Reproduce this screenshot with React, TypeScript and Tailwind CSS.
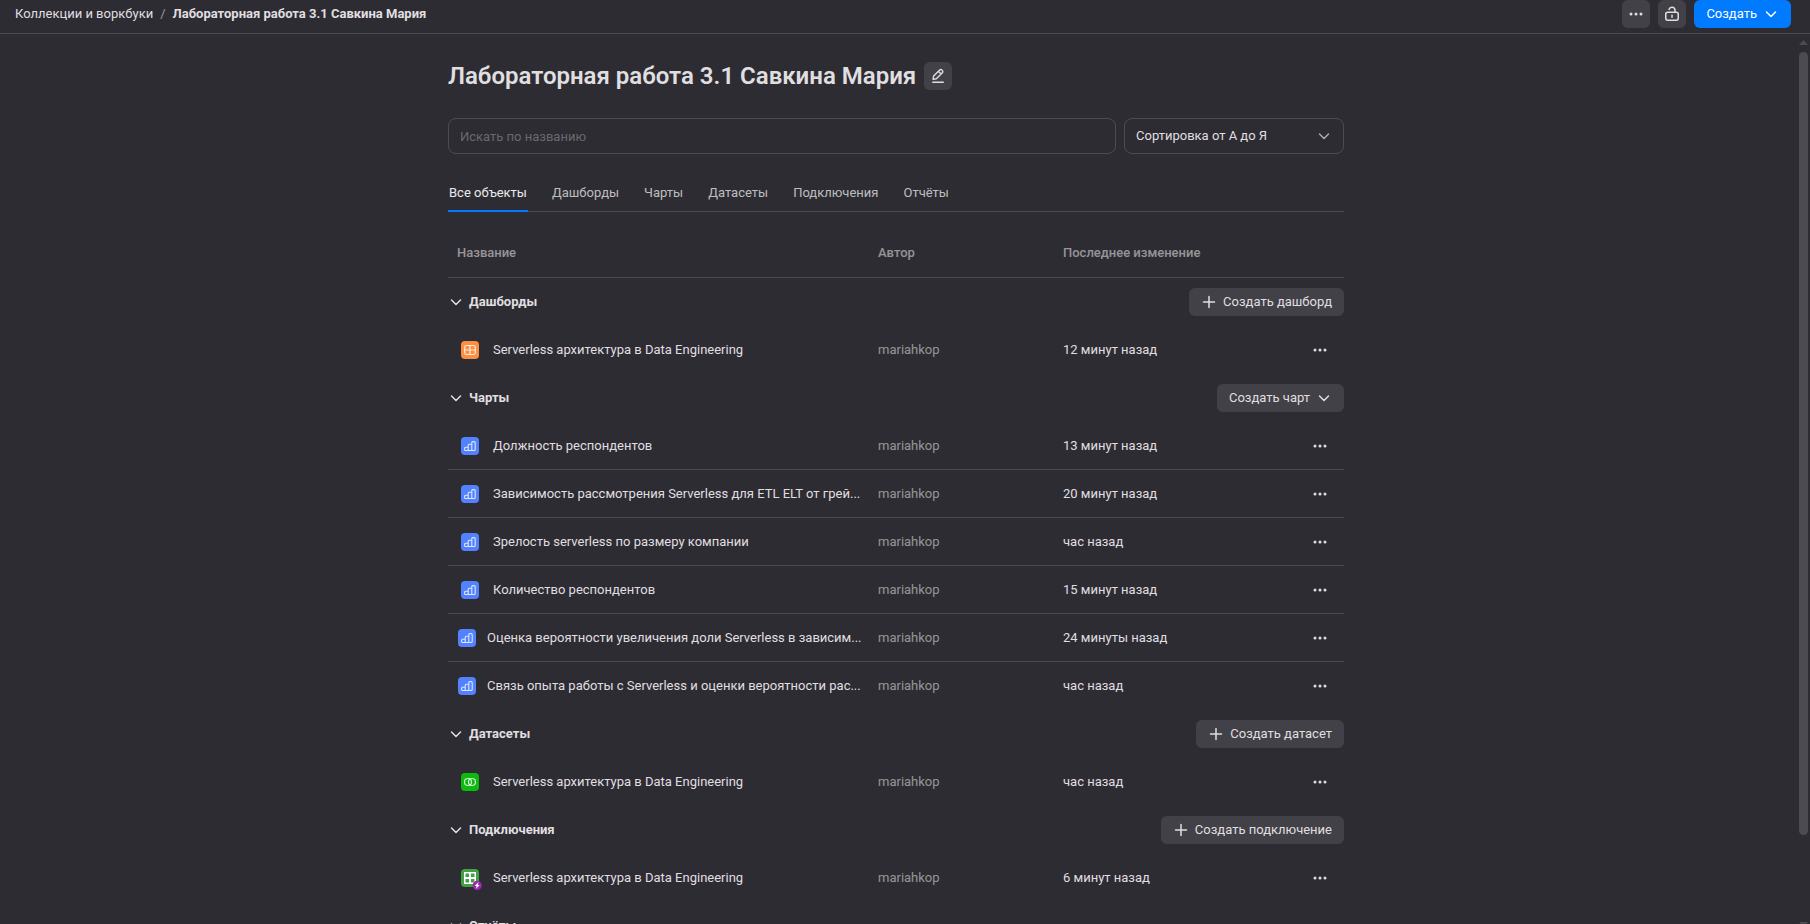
import type { ReactNode } from "react";

type Kind = "dashboard" | "chart" | "dataset" | "connection";
type Item = { name: string; date: string; narrowIcon?: boolean };
type Group = { title: string; kind: Kind; action?: string; menu?: boolean; items: Item[] };

const DATA_NAME = "Serverless архитектура в Data Engineering";

const groups: Group[] = [
  { title: "Дашборды", kind: "dashboard", action: "Создать дашборд", items: [{ name: DATA_NAME, date: "12 минут назад" }] },
  {
    title: "Чарты",
    kind: "chart",
    action: "Создать чарт",
    menu: true,
    items: [
      { name: "Должность респондентов", date: "13 минут назад" },
      { name: "Зависимость рассмотрения Serverless для ETL ELT от грей...", date: "20 минут назад" },
      { name: "Зрелость serverless по размеру компании", date: "час назад" },
      { name: "Количество респондентов", date: "15 минут назад" },
      { name: "Оценка вероятности увеличения доли Serverless в зависим...", date: "24 минуты назад", narrowIcon: true },
      { name: "Связь опыта работы с Serverless и оценки вероятности рас...", date: "час назад", narrowIcon: true },
    ],
  },
  { title: "Датасеты", kind: "dataset", action: "Создать датасет", items: [{ name: DATA_NAME, date: "час назад" }] },
  { title: "Подключения", kind: "connection", action: "Создать подключение", items: [{ name: DATA_NAME, date: "6 минут назад" }] },
  { title: "Отчёты", kind: "dashboard", items: [] },
];

const tabs = ["Все объекты", "Дашборды", "Чарты", "Датасеты", "Подключения", "Отчёты"];

function Icon({ children, className = "" }: { children: ReactNode; className?: string }) {
  return (
    <svg
      width="16"
      height="16"
      viewBox="0 0 16 16"
      fill="none"
      stroke="currentColor"
      strokeWidth="1.5"
      strokeLinecap="round"
      strokeLinejoin="round"
      aria-hidden="true"
      className={`shrink-0 ${className}`}
    >
      {children}
    </svg>
  );
}

const ChevronDown = ({ className }: { className?: string }) => (
  <Icon className={className}>
    <path d="M3.5 6 8 10.5 12.5 6" />
  </Icon>
);

const Plus = () => (
  <Icon>
    <path d="M8 2.5v11M2.5 8h11" />
  </Icon>
);

const Dots = () => (
  <Icon>
    <g fill="currentColor" stroke="none">
      <circle cx="3" cy="8" r="1.5" />
      <circle cx="8" cy="8" r="1.5" />
      <circle cx="13" cy="8" r="1.5" />
    </g>
  </Icon>
);

const LockOpen = () => (
  <Icon>
    <rect x="1.75" y="6.25" width="12.5" height="8" rx="2" />
    <path d="M5 3.4A3.1 3.1 0 0 1 11 4v2.2M8 9.3v2" />
  </Icon>
);

const Pencil = () => (
  <Icon>
    <path d="M2.75 14.25h10.5" />
    <path d="m3.6 8.1 6.1-6a1.5 1.5 0 0 1 2.1 0l.6.6a1.5 1.5 0 0 1 0 2.1l-6.1 6-3.2.6zM8.6 3.4l2.5 2.5" strokeWidth="1.4" />
  </Icon>
);

function KindIcon({ kind }: { kind: Kind }) {
  if (kind === "connection") {
    return (
      <svg width="22" height="22" viewBox="0 0 22 22" className="-mr-1 -mb-1 shrink-0" aria-hidden="true">
        <rect width="18" height="18" rx="4" fill="#43a047" />
        <path d="M3 3h12v12H3z" fill="#fff" />
        <path d="M4.5 4.5h3.6v3.6H4.5zM9.9 4.5h3.6v3.6H9.9zM4.5 9.9h3.6v3.6H4.5zM9.9 9.9h3.6v3.6H9.9z" fill="#43a047" />
        <circle cx="16.2" cy="16.4" r="4.6" fill="#9c27b0" />
        <path d="m17.6 13-3.9 4h2l-.9 3 3.9-4h-2z" fill="#fff" />
      </svg>
    );
  }
  const fill = { dashboard: "#ff8f40", chart: "#5282ff", dataset: "#0dba0d" }[kind];
  return (
    <svg width="18" height="18" viewBox="0 0 18 18" fill="none" stroke="#fff" strokeOpacity="0.8" className="shrink-0" aria-hidden="true">
      <rect width="18" height="18" rx="4" fill={fill} stroke="none" />
      {kind === "dashboard" && (
        <>
          <rect x="3.7" y="4.5" width="10.6" height="9" rx="1.8" strokeWidth="1.2" />
          <path d="M9 4.5v9M3.7 9h10.6" strokeWidth="1.2" />
        </>
      )}
      {kind === "chart" && (
        <path
          d="M7.2 13.5H4.6a1 1 0 0 1-1-1v-1.2a1 1 0 0 1 1-1h2.6M7.2 13.5V8.2a1 1 0 0 1 1-1h2.6M7.2 13.5h3.6m0 0V5.6a1 1 0 0 1 1-1h1.4a1 1 0 0 1 1 1v6.9a1 1 0 0 1-1 1z"
          strokeWidth="1.1"
        />
      )}
      {kind === "dataset" && (
        <>
          <circle cx="7" cy="9" r="3.5" strokeWidth="1.2" />
          <circle cx="11" cy="9" r="3.5" strokeWidth="1.2" />
        </>
      )}
    </svg>
  );
}

function ItemRow({ item, kind, last }: { item: Item; kind: Kind; last: boolean }) {
  const line = last ? "border-transparent" : "border-white/15";
  return (
    <tr>
      <td className={`h-12 border-b p-0 pr-2 ${line}`}>
        <a href="#" className="flex items-center">
          <span className={`flex shrink-0 justify-center ${item.narrowIcon ? "w-[38px]" : "w-11"}`}>
            <KindIcon kind={kind} />
          </span>
          <span className="truncate pl-px">{item.name}</span>
        </a>
      </td>
      <td className={`border-b p-0 px-2 text-white/50 ${line}`}>mariahkop</td>
      <td className={`border-b p-0 px-2 ${line}`}>{item.date}</td>
      <td className={`border-b p-0 pr-2.5 ${line}`}>
        <button type="button" aria-label="Действия" className="ml-auto flex size-7 items-center justify-center">
          <Dots />
        </button>
      </td>
    </tr>
  );
}

function GroupRows({ group }: { group: Group }) {
  return (
    <tbody>
      <tr>
        <th colSpan={4} scope="rowgroup" className="h-12 p-0 font-normal">
          <div className="flex items-center justify-between">
            <button type="button" aria-expanded="true" className="flex items-center gap-[5px] font-bold">
              <ChevronDown />
              {group.title}
            </button>
            {group.action && (
              <button type="button" className="flex h-7 items-center gap-1.5 rounded-md bg-white/10 px-3">
                {!group.menu && <Plus />}
                {group.action}
                {group.menu && <ChevronDown />}
              </button>
            )}
          </div>
        </th>
      </tr>
      {group.items.map((item, i) => (
        <ItemRow key={item.name} item={item} kind={group.kind} last={i === group.items.length - 1} />
      ))}
    </tbody>
  );
}

export default function App() {
  return (
    <div className="flex h-screen flex-col overflow-hidden bg-[#2d2c33] font-['Roboto',sans-serif] text-[13px] leading-[18px] text-[#e0dfe0]">
      <header className="flex shrink-0 items-start justify-between border-b border-white/15 pr-[19px] pb-[5px] pl-[15px]">
        <nav aria-label="Навигация" className="flex h-7 items-center gap-[7px]">
          <a href="#">Коллекции и воркбуки</a>
          <span className="text-white/50">/</span>
          <a href="#" className="font-bold">
            Лабораторная работа 3.1 Савкина Мария
          </a>
        </nav>
        <div className="flex gap-2">
          <button type="button" aria-label="Ещё" className="flex size-7 items-center justify-center rounded-md bg-white/10">
            <Dots />
          </button>
          <button type="button" aria-label="Доступ" className="flex size-7 items-center justify-center rounded-md bg-white/10">
            <LockOpen />
          </button>
          <button type="button" className="flex h-7 items-center gap-1.5 rounded-md bg-[#007bff] px-3 text-white">
            Создать
            <ChevronDown />
          </button>
        </div>
      </header>

      <div className="flex min-h-0 flex-1">
        <main className="min-w-0 flex-1 overflow-hidden pt-7">
          <div className="mx-auto max-w-4xl">
            <div className="flex items-center gap-2">
              <h1 className="text-2xl leading-7 font-semibold">Лабораторная работа 3.1 Савкина Мария</h1>
              <button type="button" aria-label="Переименовать" className="flex size-7 items-center justify-center rounded-md bg-white/10">
                <Pencil />
              </button>
            </div>

            <div className="mt-7 flex gap-2">
              <input
                type="text"
                aria-label="Искать по названию"
                placeholder="Искать по названию"
                className="h-9 min-w-0 flex-1 rounded-lg border border-white/15 bg-transparent px-[11px] placeholder:text-white/30"
              />
              <div className="relative w-[220px]">
                <select aria-label="Сортировка" className="h-9 w-full appearance-none rounded-lg border border-white/15 bg-transparent px-[11px]">
                  <option>Сортировка от А до Я</option>
                </select>
                <ChevronDown className="pointer-events-none absolute top-2.5 right-3 text-white/60" />
              </div>
            </div>

            <div role="tablist" className="mt-5 flex h-[38px] gap-[23px] border-b border-white/15">
              {tabs.map((t, i) => (
                <button
                  key={t}
                  type="button"
                  role="tab"
                  aria-selected={i === 0}
                  className={`-mb-px border-b-2 px-px pt-0.5 ${i === 0 ? "border-[#007bff] text-white/90" : "border-transparent text-white/70"}`}
                >
                  {t}
                </button>
              ))}
            </div>

            <table className="mt-4 w-full table-fixed border-separate border-spacing-0 text-left">
              <colgroup>
                <col />
                <col className="w-[185px]" />
                <col className="w-[185px]" />
                <col className="w-[104px]" />
              </colgroup>
              <thead className="text-white/50">
                <tr>
                  <th className="h-[50px] border-b border-white/15 p-0 pl-[9px] font-medium">Название</th>
                  <th className="border-b border-white/15 p-0 pl-2 font-medium">Автор</th>
                  <th className="border-b border-white/15 p-0 pl-2 font-medium">Последнее изменение</th>
                  <td className="border-b border-white/15 p-0" />
                </tr>
              </thead>
              {groups.map((g) => (
                <GroupRows key={g.title} group={g} />
              ))}
            </table>
          </div>
        </main>

        <div aria-hidden="true" className="flex w-[18px] shrink-0 flex-col items-start pt-1.5 pl-[7px]">
          <svg width="9" height="5" viewBox="0 0 9 5" className="mb-[7px] shrink-0 fill-[#4c4b51]">
            <path d="M4.5 0 9 5H0z" />
          </svg>
          <div className="w-[9px] flex-9 rounded-full bg-[#4c4b51]" />
          <div className="flex-1" />
          <svg width="9" height="2" viewBox="0 0 9 2" className="shrink-0 fill-[#4c4b51]">
            <path d="M0 0h9L7.2 2H1.8z" />
          </svg>
        </div>
      </div>
    </div>
  );
}
